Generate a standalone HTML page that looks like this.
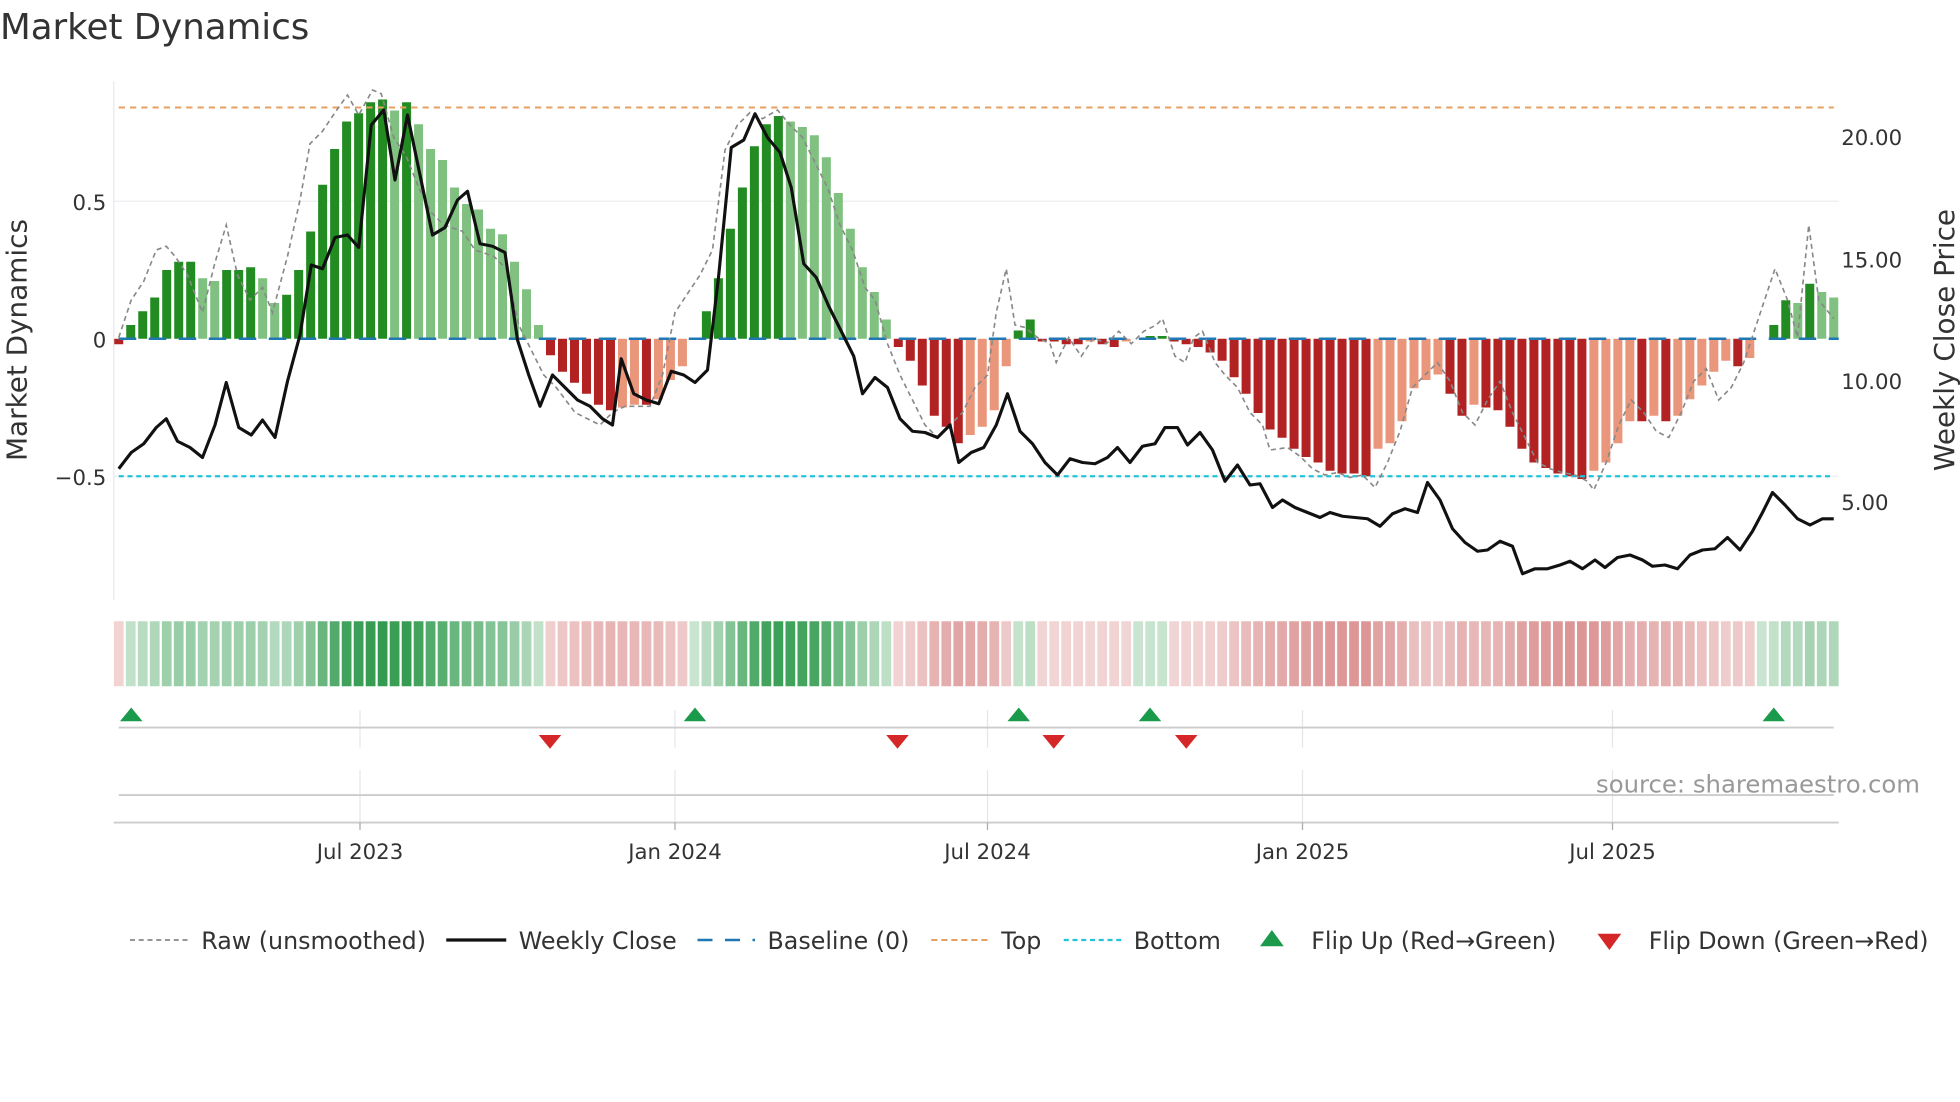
<!DOCTYPE html>
<html><head><meta charset="utf-8"><style>
html,body{margin:0;padding:0;background:#fff;width:1960px;height:1102px;overflow:hidden}
svg{display:block}
text{font-family:"DejaVu Sans","Liberation Sans",sans-serif;fill:#333}
</style></head><body>
<svg id="s" width="1960" height="1102" viewBox="0 0 1568 881.6" xmlns="http://www.w3.org/2000/svg">
<text x="0" y="31" font-size="28.5">Market Dynamics</text>
<line x1="91" y1="65" x2="91" y2="480" stroke="#e6e8ee" stroke-width="1"/>
<line x1="91" y1="161" x2="1471" y2="161" stroke="#eceef2" stroke-width="1"/>
<line x1="91" y1="381" x2="1471" y2="381" stroke="#eceef2" stroke-width="1"/>
<g id="bars"></g>
<line x1="95" y1="271" x2="1471" y2="271" stroke="#1f77b4" stroke-width="2" stroke-dasharray="14,10"/>
<line x1="95" y1="86" x2="1467" y2="86" stroke="#e8a060" stroke-width="1.6" stroke-dasharray="5,4"/>
<line x1="95" y1="381" x2="1467" y2="381" stroke="#22c3d6" stroke-width="1.8" stroke-dasharray="4,3"/>
<polyline id="raw" fill="none" stroke="#888" stroke-width="1.3" stroke-dasharray="4,3"/>
<polyline id="close" fill="none" stroke="#111" stroke-width="2.5" stroke-linejoin="round"/>
<text x="85" y="168" font-size="17" text-anchor="end">0.5</text>
<text x="85" y="278" font-size="17" text-anchor="end">0</text>
<text x="85" y="388" font-size="17" text-anchor="end">−0.5</text>
<text x="1473" y="116" font-size="17">20.00</text>
<text x="1473" y="214" font-size="17">15.00</text>
<text x="1473" y="311" font-size="17">10.00</text>
<text x="1473" y="408" font-size="17">5.00</text>
<text transform="translate(21,272) rotate(-90)" font-size="22.3" text-anchor="middle">Market Dynamics</text>
<text transform="translate(1563,272) rotate(-90)" font-size="22.3" text-anchor="middle">Weekly Close Price</text>
<g id="strip"></g>
<g stroke="#e4e6ec" stroke-width="1">
<line x1="288" y1="568" x2="288" y2="598"/><line x1="540" y1="568" x2="540" y2="598"/><line x1="790" y1="568" x2="790" y2="598"/><line x1="1042" y1="568" x2="1042" y2="598"/><line x1="1290" y1="568" x2="1290" y2="598"/>
<line x1="288" y1="616" x2="288" y2="658"/><line x1="540" y1="616" x2="540" y2="658"/><line x1="790" y1="616" x2="790" y2="658"/><line x1="1042" y1="616" x2="1042" y2="658"/><line x1="1290" y1="616" x2="1290" y2="658"/>
</g>
<line x1="95" y1="582" x2="1467" y2="582" stroke="#ccc" stroke-width="1.5"/>
<line x1="95" y1="636" x2="1467" y2="636" stroke="#ccc" stroke-width="1.5"/>
<line x1="91" y1="658" x2="1471" y2="658" stroke="#ccc" stroke-width="1.5"/>
<g stroke="#aaa" stroke-width="1">
<line x1="288" y1="658" x2="288" y2="664"/><line x1="540" y1="658" x2="540" y2="664"/><line x1="790" y1="658" x2="790" y2="664"/><line x1="1042" y1="658" x2="1042" y2="664"/><line x1="1290" y1="658" x2="1290" y2="664"/>
</g>
<g id="flips"></g>
<text x="1536" y="634" font-size="19.5" text-anchor="end" style="fill:#999">source: sharemaestro.com</text>
<g font-size="17" text-anchor="middle">
<text x="288" y="687">Jul 2023</text><text x="540" y="687">Jan 2024</text><text x="790" y="687">Jul 2024</text><text x="1042" y="687">Jan 2025</text><text x="1290" y="687">Jul 2025</text>
</g>
<g font-size="19">
<line x1="104" y1="752" x2="150" y2="752" stroke="#888" stroke-width="1.4" stroke-dasharray="4,3"/>
<text x="161" y="759">Raw (unsmoothed)</text>
<line x1="357" y1="752" x2="405" y2="752" stroke="#111" stroke-width="2.6"/>
<text x="415" y="759">Weekly Close</text>
<line x1="558" y1="752" x2="604" y2="752" stroke="#1f77b4" stroke-width="2" stroke-dasharray="12,10"/>
<text x="614" y="759">Baseline (0)</text>
<line x1="745" y1="752" x2="791" y2="752" stroke="#e8a060" stroke-width="1.6" stroke-dasharray="5,3"/>
<text x="801" y="759">Top</text>
<line x1="851" y1="752" x2="897" y2="752" stroke="#22c3d6" stroke-width="1.8" stroke-dasharray="4,3"/>
<text x="907" y="759">Bottom</text>
<polygon points="1008,757 1027,757 1017.5,744" fill="#1a9a4a"/>
<text x="1049" y="759">Flip Up (Red→Green)</text>
<polygon points="1278,747 1297,747 1287.5,760" fill="#d62728"/>
<text x="1319" y="759">Flip Down (Green→Red)</text>
</g>
</svg>
<script>
var v=[-0.02,.05,.10,.15,.25,.28,.28,.22,.21,.25,.25,.26,.22,.13,.16,.25,.39,.56,.69,.79,.82,.86,.87,.83,.86,.78,.69,.65,.55,.49,.47,.40,.38,.28,.18,.05,
-.06,-.12,-.16,-.20,-.24,-.26,-.25,-.24,-.24,-.22,-.15,-.10,0,.10,.22,.40,.55,.70,.78,.81,.79,.77,.74,.66,.53,.40,.26,.17,.07,
-.03,-.08,-.17,-.28,-.32,-.38,-.35,-.32,-.26,-.10,.03,.07,-.01,-.01,-.02,-.02,-.01,-.02,-.03,-.01,0,.01,.01,
-.01,-.02,-.03,-.05,-.08,-.14,-.20,-.27,-.33,-.36,-.40,-.43,-.45,-.48,-.49,-.49,-.50,-.40,-.38,-.30,-.18,-.15,-.13,-.20,-.28,-.24,-.25,-.26,-.32,-.40,-.45,-.47,-.49,-.50,-.51,-.48,-.45,-.38,-.30,-.30,-.28,-.30,-.28,-.22,-.17,-.12,-.08,-.10,-.07,0,.05,.14,.13,.20,.17,.15];
var N=v.length,x0=95,sp=(1467-95)/(N-1),NS="http://www.w3.org/2000/svg";
function el(t,a,p){var e=document.createElementNS(NS,t);for(var k in a)e.setAttribute(k,a[k]);p.appendChild(e);return e;}
var bars=document.getElementById('bars'),strip=document.getElementById('strip');
for(var i=0;i<N;i++){var x=x0+i*sp,val=v[i],p=i?v[i-1]:0,c;
 if(val>=0)c=(val>=p)?'#228b22':'#80c080';else c=(val<=p)?'#b22222':'#e9967a';
 var h=Math.abs(val)*220;
 if(h>0.5)el('rect',{x:x-3.6,y:val>=0?271-h:271,width:7.2,height:h,fill:c},bars);
 var a,col;
 if(val>=0){a=0.25+0.7*Math.min(val/0.87,1);col='rgba(40,150,70,'+a+')';}
 else{a=0.22+0.35*Math.min(-val/0.5,1);col='rgba(195,70,70,'+a+')';}
 el('rect',{x:x-sp/2+0.9,y:497,width:sp-1.8,height:52,fill:col},strip);
}
var raw=[[95,270],[105,240],[115,225],[125,200],[133,197],[140,205],[150,220],[162,250],[172,210],[181,180],[190,220],[200,240],[210,230],[218,250],[230,205],[240,160],[248,115],[258,105],[268,90],[278,76],[287,92],[298,72],[305,75],[315,110],[325,125],[335,150],[345,170],[355,180],[370,185],[380,200],[395,205],[405,215],[415,260],[425,280],[435,300],[445,310],[460,330],[480,340],[490,330],[500,325],[520,325],[530,300],[540,250],[550,235],[560,220],[570,200],[580,120],[590,100],[600,90],[610,95],[622,88],[632,100],[642,110],[652,130],[662,150],[672,180],[682,200],[692,230],[700,240],[710,275],[720,300],[730,320],[740,340],[750,350],[760,340],[770,330],[780,310],[790,300],[797,250],[805,215],[812,260],[820,262],[830,270],[840,275],[845,290],[855,270],[865,285],[875,270],[885,275],[895,265],[905,275],[915,265],[925,260],[930,255],[940,285],[948,290],[955,270],[962,265],[972,290],[980,300],[990,310],[1000,330],[1010,340],[1016,360],[1030,358],[1040,365],[1050,375],[1060,380],[1070,378],[1080,382],[1090,380],[1100,390],[1110,370],[1120,345],[1130,310],[1140,300],[1150,290],[1160,305],[1170,330],[1180,340],[1190,320],[1200,305],[1210,330],[1220,350],[1230,370],[1240,375],[1250,378],[1260,380],[1270,385],[1275,392],[1285,370],[1295,340],[1305,320],[1315,330],[1325,345],[1335,350],[1345,330],[1355,305],[1365,295],[1375,320],[1385,310],[1395,290],[1405,260],[1420,215],[1430,240],[1438,270],[1447,180],[1455,240],[1467,255]];
var cl=[[95,375],[105,362],[115,355],[125,342],[133,335],[142,353],[152,358],[162,366],[172,340],[181,306],[191,342],[201,348],[210,336],[220,350],[230,305],[240,268],[249,212],[258,215],[268,190],[278,188],[287,198],[297,100],[307,88],[316,144],[326,92],[336,140],[346,188],[356,182],[366,160],[374,153],[384,195],[394,197],[404,202],[414,272],[423,300],[432,325],[442,300],[452,310],[462,320],[472,325],[482,335],[490,340],[497,287],[507,315],[517,320],[527,323],[537,297],[547,300],[556,306],[566,296],[575,220],[585,118],[595,112],[604,91],[614,110],[624,122],[633,150],[643,211],[653,222],[663,245],[673,265],[683,285],[690,315],[700,302],[710,310],[720,335],[730,345],[740,346],[750,350],[760,340],[767,370],[777,362],[787,358],[797,340],[806,315],[816,345],[826,355],[836,370],[846,380],[856,367],[866,370],[876,371],[886,366],[894,358],[904,370],[914,357],[924,355],[932,342],[942,342],[950,356],[960,346],[970,360],[980,385],[990,372],[1000,388],[1008,387],[1018,406],[1026,400],[1036,406],[1046,410],[1056,414],[1064,410],[1074,413],[1084,414],[1094,415],[1104,421],[1114,411],[1124,407],[1134,410],[1142,386],[1152,400],[1162,423],[1172,434],[1182,441],[1190,440],[1200,433],[1210,437],[1218,459],[1228,455],[1238,455],[1248,452],[1256,449],[1266,455],[1276,448],[1284,454],[1294,446],[1304,444],[1314,448],[1322,453],[1332,452],[1342,455],[1352,444],[1362,440],[1372,439],[1382,430],[1392,440],[1402,425],[1410,410],[1418,394],[1428,404],[1438,415],[1448,420],[1458,415],[1467,415]];
document.getElementById('raw').setAttribute('points',raw.join(' '));
document.getElementById('close').setAttribute('points',cl.join(' '));
var f=document.getElementById('flips');
[105,556,815,920,1419].forEach(function(x){el('polygon',{points:(x-9)+',577 '+(x+9)+',577 '+x+',566',fill:'#1a9a4a'},f);});
[440,718,843,949].forEach(function(x){el('polygon',{points:(x-9)+',588 '+(x+9)+',588 '+x+',599',fill:'#d62728'},f);});
</script>
</body></html>
